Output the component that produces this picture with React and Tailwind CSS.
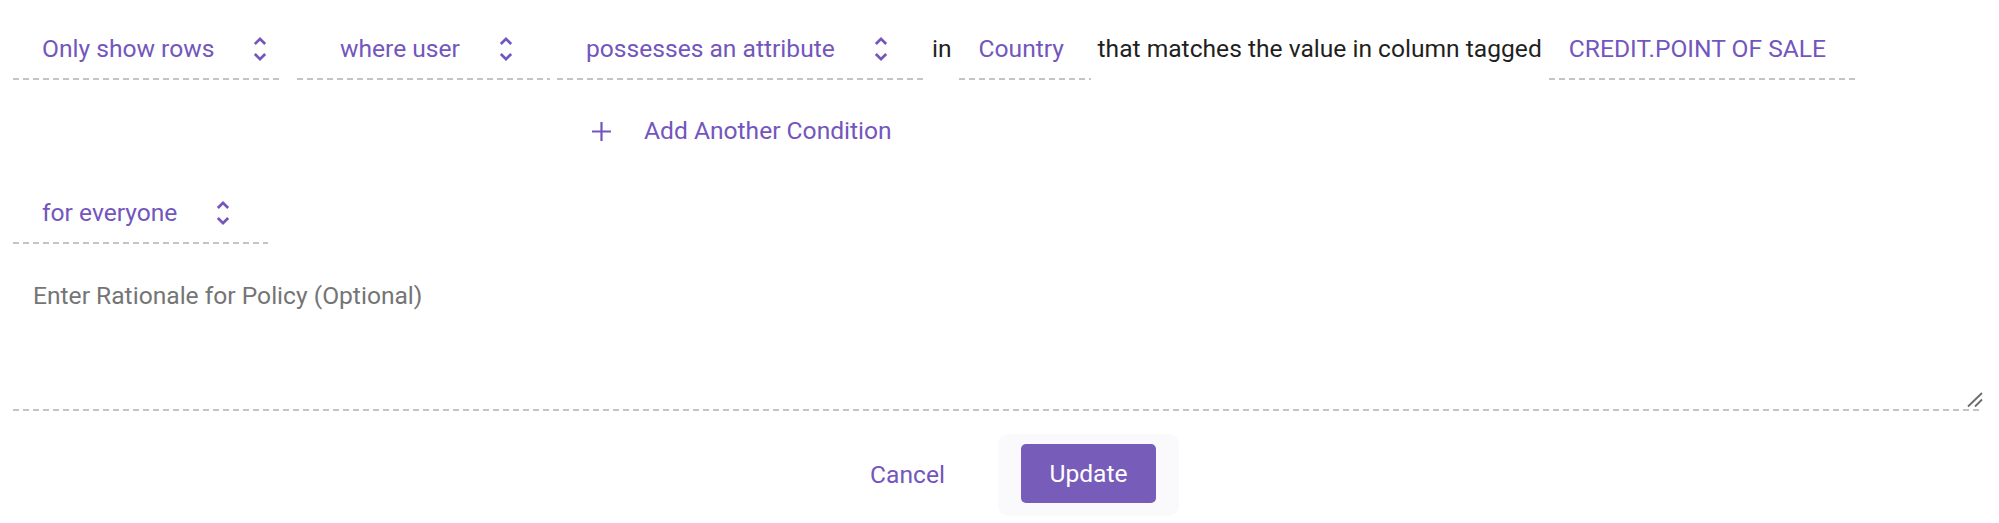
import React from "react";

const dash =
  "bg-[linear-gradient(90deg,#c4c4c4_6px,transparent_6px)] bg-[length:10px_2px] bg-repeat-x bg-left-bottom";

function UnfoldIcon() {
  return (
    <svg width="32" height="32" viewBox="0 0 24 24" className="shrink-0" fill="#7356bd">
      <path d="M12 5.83L15.17 9l1.41-1.41L12 3 7.41 7.59 8.83 9 12 5.83zm0 12.34L8.83 15l-1.41 1.41L12 21l4.59-4.59L15.17 15 12 18.17z" />
    </svg>
  );
}

function Select({ label, width, pl }) {
  return (
    <div className={`flex h-[62px] items-start pt-[17px] pb-[15px] ${width} ${pl} ${dash}`}>
      <span className="whitespace-nowrap">{label}</span>
      <span className="ml-[30px] flex h-[28px] items-center">
        <UnfoldIcon />
      </span>
    </div>
  );
}

export default function App() {
  return (
    <div className="min-h-[523px] w-full bg-white pl-[13px] pr-[16px] pt-[18px] font-['Roboto','Noto_Sans',sans-serif] text-[24.6px] leading-[28px] text-[#7356bd]">
      <div className="flex items-start gap-[7px] whitespace-nowrap">
        <Select label="Only show rows" width="w-[270px]" pl="pl-[29px]" />
        <div className="ml-[7px]">
          <Select label="where user" width="w-[253px]" pl="pl-[43px]" />
        </div>
        <Select label="possesses an attribute" width="w-[368px]" pl="pl-[29px]" />
        <span className="pt-[17px] pb-[15px] text-[#1f1f1f]">in</span>
        <div className={`h-[62px] w-[132px] pl-[20px] pt-[17px] pb-[15px] ${dash}`}>Country</div>
        <span className="pt-[17px] pb-[15px] text-[#1f1f1f]">
          that matches the value in column tagged
        </span>
        <div className={`h-[62px] w-[307px] pl-[20px] pt-[17px] pb-[15px] ${dash}`}>
          CREDIT.POINT OF SALE
        </div>
      </div>

      <div className="mt-[37px] ml-[578px] flex items-center">
        <svg width="21" height="21" viewBox="0 0 21 21" className="shrink-0">
          <path d="M10.5 1v19M1 10.5h19" stroke="#7356bd" strokeWidth="2.2" />
        </svg>
        <span className="ml-[32px]">Add Another Condition</span>
      </div>

      <div className="mt-[37px] flex">
        <Select label="for everyone" width="w-[255px]" pl="pl-[29px]" />
      </div>

      <div className="relative mt-[18px]">
        <textarea
          placeholder="Enter Rationale for Policy (Optional)"
          className="block h-[149px] w-full resize-none border-0 border-b-2 border-transparent bg-origin-border bg-[linear-gradient(90deg,#c4c4c4_6px,transparent_6px)] bg-[length:10px_2px] bg-repeat-x bg-left-bottom pl-[20px] pt-[20px] text-[24.6px] leading-[28px] text-[#1f1f1f] outline-none placeholder:text-[#757575]"
        />
        <svg
          width="16"
          height="16"
          viewBox="0 0 16 16"
          className="pointer-events-none absolute right-0 bottom-[3px]"
        >
          <path d="M1 14.5L15 1M8 14.5L15 7.5" stroke="#6b6b6b" strokeWidth="1.8" />
        </svg>
      </div>

      <div className="mt-[23px] flex justify-center">
        <button className="flex h-[82px] w-[181px] items-center justify-center text-[#7356bd]">
          Cancel
        </button>
        <div className="h-[82px] w-[181px] rounded-[10px] bg-[#fafafc] px-[23px] pt-[10px] pb-[13px]">
          <button className="flex h-full w-full items-center justify-center rounded-[5px] bg-[#785cba] text-white">
            Update
          </button>
        </div>
      </div>
    </div>
  );
}
